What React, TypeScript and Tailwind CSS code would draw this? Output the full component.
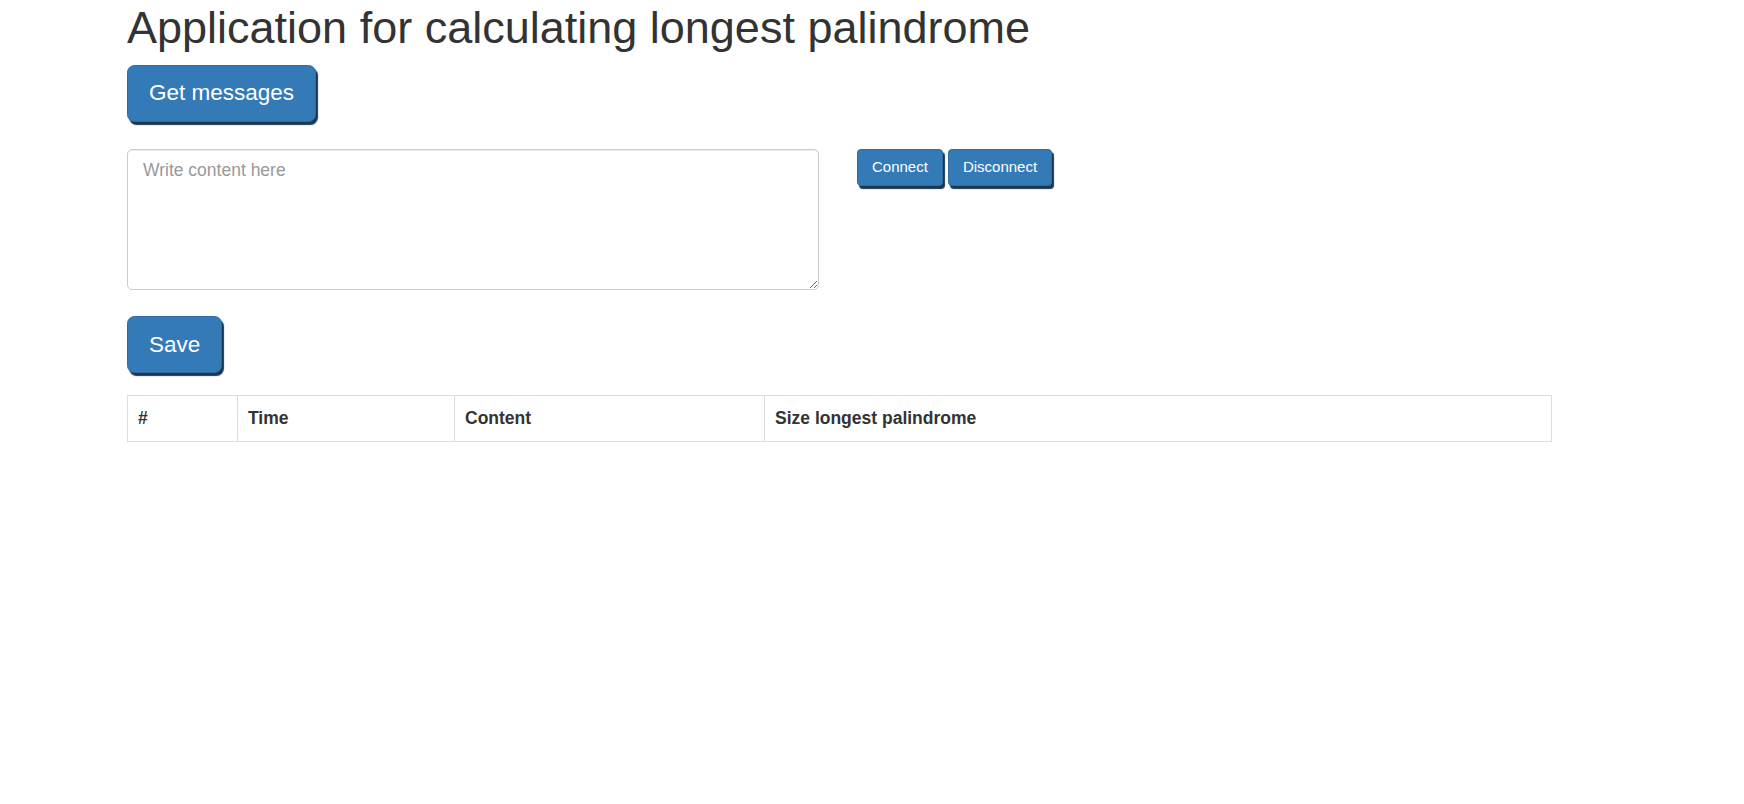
import React from 'react';

const btnLg =
    'block bg-[#337ab7] border-[1.25px] border-[#2e6da4] text-white text-[22.5px] leading-[30px] px-[21px] py-[12.5px] rounded-[7.5px] shadow-[2px_3px_1px_#1a3652]';
const btnSm =
    'bg-[#337ab7] border-[1.25px] border-[#2e6da4] text-white text-[15px] leading-[22.5px] px-[14px] py-[6.25px] rounded-[3.75px] shadow-[2px_3px_1px_#1a3652]';

const App = () => {
    return (
        <div className="min-h-screen bg-white text-[#333] font-['Liberation_Sans',Arial,sans-serif] text-[17.5px] pl-[127px]">
            <h1 className="text-[45px] leading-[49.5px] pt-[3px] font-normal">
                Application for calculating longest palindrome
            </h1>
            <button className={`${btnLg} mt-[12px]`}>Get messages</button>

            <div className="flex items-start mt-[27.5px]">
                <textarea
                    rows={5}
                    placeholder="Write content here"
                    className="w-[692px] h-[141px] border-[1.25px] border-[#ccc] rounded-[5px] px-[15px] py-[7.5px] text-[17.5px] leading-[25px] placeholder:text-[#999] shadow-[inset_0_1px_1px_rgba(0,0,0,0.075)] outline-none"
                />
                <div className="flex gap-[5px] ml-[38px]">
                    <button className={btnSm}>Connect</button>
                    <button className={btnSm}>Disconnect</button>
                </div>
            </div>

            <button className={`${btnLg} mt-[26px]`}>Save</button>

            {/* tabela wiadomosci */}
            <table className="mt-[21.5px] w-[1425px] border-collapse border-[1.25px] border-[#ddd]">
                <thead>
                    <tr className="text-left">
                        <th className="w-[110px] border-[1.25px] border-[#ddd] p-[10px] leading-[25px] font-bold">#</th>
                        <th className="w-[217px] border-[1.25px] border-[#ddd] p-[10px] leading-[25px] font-bold">Time</th>
                        <th className="w-[310px] border-[1.25px] border-[#ddd] p-[10px] leading-[25px] font-bold">Content</th>
                        <th className="border-[1.25px] border-[#ddd] p-[10px] leading-[25px] font-bold">Size longest palindrome</th>
                    </tr>
                </thead>
                <tbody></tbody>
            </table>
        </div>
    );
};

export default App;
